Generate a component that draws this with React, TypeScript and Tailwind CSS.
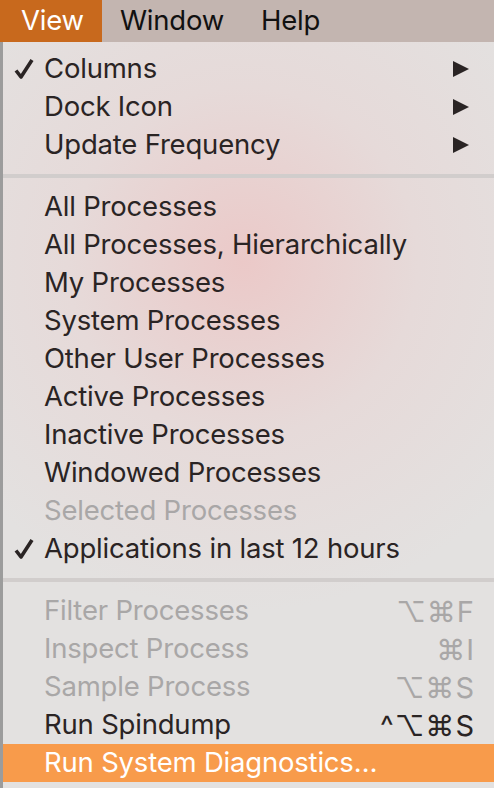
import React from 'react';

type Item = {
  label: string;
  checked?: boolean;
  submenu?: boolean;
  disabled?: boolean;
  shortcut?: string;
  highlighted?: boolean;
};

const groups: Item[][] = [
  [
    { label: 'Columns', checked: true, submenu: true },
    { label: 'Dock Icon', submenu: true },
    { label: 'Update Frequency', submenu: true },
  ],
  [
    { label: 'All Processes' },
    { label: 'All Processes, Hierarchically' },
    { label: 'My Processes' },
    { label: 'System Processes' },
    { label: 'Other User Processes' },
    { label: 'Active Processes' },
    { label: 'Inactive Processes' },
    { label: 'Windowed Processes' },
    { label: 'Selected Processes', disabled: true },
    { label: 'Applications in last 12 hours', checked: true },
  ],
  [
    { label: 'Filter Processes', disabled: true, shortcut: '⌥⌘F' },
    { label: 'Inspect Process', disabled: true, shortcut: '⌘I' },
    { label: 'Sample Process', disabled: true, shortcut: '⌥⌘S' },
    { label: 'Run Spindump', shortcut: '^⌥⌘S' },
    { label: 'Run System Diagnostics…', highlighted: true },
  ],
];

const Check = () => (
  <svg width="20" height="22" viewBox="0 0 20 22" className="absolute left-[11px] top-[8px]">
    <path d="M2 12.5 L7 19 L18 2" fill="none" stroke="currentColor" strokeWidth="3.6" strokeLinejoin="round" />
  </svg>
);

const MenuRow = ({ item }: { item: Item }) => {
  const color = item.highlighted
    ? 'bg-[#f89b4b] text-white'
    : item.disabled
      ? 'text-[#a9a7a7]'
      : 'text-[#2a2424]';
  return (
    <div className={`relative h-[38px] flex items-center pl-[41px] pr-[20px] ${color}`}>
      {item.checked && <Check />}
      <span className="flex-1 whitespace-nowrap">{item.label}</span>
      {item.submenu && (
        <svg width="18" height="18" viewBox="0 0 18 18" className="mr-[4px]">
          <path d="M1 1 L17 9 L1 17 Z" fill="#2a2424" />
        </svg>
      )}
      {item.shortcut && (
        <span className="whitespace-nowrap text-[29px] tracking-[1px] -mr-[1px]">{item.shortcut}</span>
      )}
    </div>
  );
};

export default function App() {
  return (
    <div
      className="w-[494px] h-[788px] overflow-hidden flex flex-col text-[27.5px] leading-none tracking-[-0.2px]"
      style={{ fontFamily: 'Inter, "Noto Sans", sans-serif' }}
    >
      {/* menu bar */}
      <div className="h-[42px] shrink-0 flex items-center bg-[#c3b5b0] text-[#111]">
        <div className="h-full pl-[21px] pr-[18px] flex items-center bg-[#c8691d] text-white">View</div>
        <div className="pl-[18px] pr-[18px]">Window</div>
        <div className="px-[19px]">Help</div>
      </div>
      {/* menu */}
      <div className="flex-1 flex">
        <div className="w-[3px] bg-[#9c9c9c]" />
        <div className="flex-1 pt-[8px] bg-[radial-gradient(circle_at_240px_220px,#ebc9c8_0%,#e6dad9_30%,#e3e1e0_60%)]">
          {groups.map((g, gi) => (
            <div key={gi}>
              {gi > 0 && (
                <div className="py-[10px]">
                  <div className="h-[4px] bg-[#d1cdcc]" />
                </div>
              )}
              {g.map((item) => (
                <MenuRow key={item.label} item={item} />
              ))}
            </div>
          ))}
        </div>
      </div>
    </div>
  );
}
